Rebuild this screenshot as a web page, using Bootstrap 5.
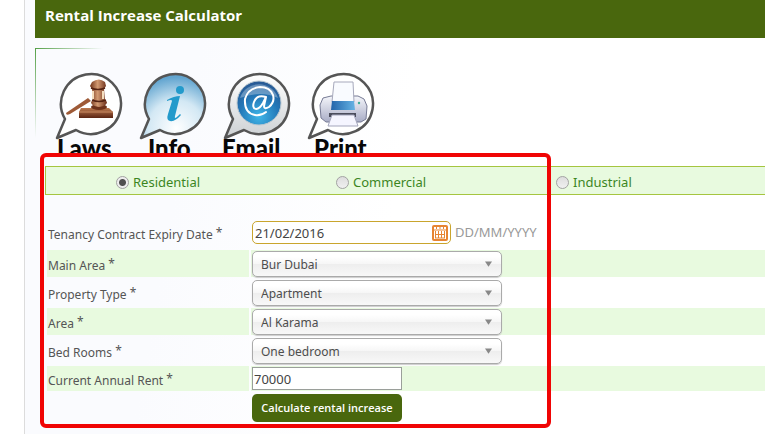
<!DOCTYPE html>
<html lang="en">
<head>
<meta charset="utf-8">
<meta name="viewport" content="width=device-width, initial-scale=1">
<title>Rental Increase Calculator</title>
<link href="https://cdn.jsdelivr.net/npm/bootstrap@5.3.0/dist/css/bootstrap.min.css" rel="stylesheet">
<style>
body{font-family:"Noto Sans","Liberation Sans",sans-serif;font-size:12px;line-height:18px;color:#555;background:#fff;overflow-x:hidden}
.page{margin-left:24px;border-left:1px solid #dcdcdc;padding-left:10px;min-height:100vh;background:linear-gradient(100deg,#fafbfe 0,#fafbfe 180px,#fff 400px)}
.title-bar{background:#49670d;color:#fff;height:38px;padding:6px 10px;margin:0;font-size:15px;line-height:18px;font-weight:700;font-family:"Open Sans","Noto Sans",sans-serif}
.panel{margin-top:10px;padding:0 0 0 10px;background:linear-gradient(90deg,#55a048,transparent 68px) 0 0/100% 1px no-repeat,linear-gradient(#55a048,transparent 90px) 0 0/1px 100% no-repeat}
.tools{padding:24px 0 0 4px;height:110px}
.tools a{display:block;height:92px}
.tools svg{display:block}
.tools text{fill:#080808}
.tool-name{font-family:Lato,sans-serif;font-size:24px;font-weight:900}
.form-zone{padding-top:8px}
.callout-frame{position:absolute;z-index:3;left:-5px;top:-5px;width:511px;bottom:-6px;border:4px solid #f00404;border-radius:6px;pointer-events:none}
.kind-bar{background:#e8fadf;border:1px solid #a5c540;border-right:0;height:29px;padding-left:70px;font-size:13px;color:#3c861f}
.kind-bar label{width:220px;flex:none;gap:4px;padding-top:2px}
.kind-bar input{appearance:none;width:13px;height:13px;margin:1px 0 0;border:1px solid #a2a2a2;border-radius:50%;background:linear-gradient(#ddd,#f0f0f0)}
.kind-bar input:checked{background:radial-gradient(circle,#505050 0 3px,#eee 4px)}
.lines{padding-left:2px}
.line{height:27px;margin-bottom:2px;gap:2px}
.line>label{width:202px;flex:none;padding:7px 1px 0}
.line>label span{position:relative;top:-2px}
.line>.field{padding-left:1px;padding-top:1px}
.line.tint>*{background:#e8fadf}
.line.date{height:31px;margin-top:22px;margin-bottom:2px}
.line.date>label{padding-top:9px}
.line.date>.field{padding-top:4px}
.line.rent{height:25px;margin-bottom:3px}
.line.rent>label{padding-top:6px}
.date-box{width:199px;height:23px;border:1px solid #c9a52d;border-radius:5px;background:#fff;padding:0 2px}
.date-box input{border:0;background:none;outline:0;flex:1;min-width:0;padding:0;height:21px;color:#444;font-size:13px}
.date-box button{border:0;background:none;padding:0;line-height:0}
.hint{color:#999;margin-left:4px;font-size:13px;line-height:22px}
.pick{width:250px;height:26px;line-height:18px;padding:3px 24px 1px 8px;font-size:12px;color:#4d4d4d;border:1px solid #aaa;border-radius:5px;box-shadow:0 1px 1px #ccc;background:url("data:image/svg+xml,%3Csvg xmlns='http://www.w3.org/2000/svg' viewBox='0 0 8 6'%3E%3Cpath d='M0 0h8L4 6z' fill='%23888'/%3E%3C/svg%3E") right 9px top 9px/7px 6px no-repeat,linear-gradient(#fff 0 20%,#f6f6f6 50%,#eee 52%,#f8f8f8)}
.rent-box{width:150px;height:23px;border:1px solid #9a9f9a;border-radius:0;background:#fff;padding:0 1px;color:#444;font-size:13px}
.calc{width:150px;height:28px;margin-left:205px;padding:0;border:0;border-radius:5px;background:#49670d;color:#fff;font-size:11px;font-weight:600;line-height:18px;font-family:"Open Sans","Noto Sans",sans-serif}
.calc:hover{background:#3c550a;color:#fff}
</style>
<script src="https://cdn.jsdelivr.net/npm/bootstrap@5.3.0/dist/js/bootstrap.bundle.min.js"></script>
</head>
<body>
<svg width="0" height="0" class="position-absolute" aria-hidden="true">
  <defs>
    <linearGradient id="wood" x2="0" y2="1"><stop stop-color="#bd7a50"/><stop offset="1" stop-color="#5a2413"/></linearGradient>
    <linearGradient id="head"><stop stop-color="#6f3117"/><stop offset=".45" stop-color="#d39a72"/><stop offset="1" stop-color="#672a16"/></linearGradient>
    <radialGradient id="sky" cx=".55" cy=".85" r=".8"><stop stop-color="#fff"/><stop offset=".55" stop-color="#d3e8f4"/><stop offset="1" stop-color="#62a5d0"/></radialGradient>
    <radialGradient id="orb" cx=".5" cy=".8" r=".75"><stop stop-color="#3fb6e8"/><stop offset=".6" stop-color="#2377b7"/><stop offset="1" stop-color="#285b96"/></radialGradient>
    <linearGradient id="rim" x2="0" y2="1"><stop stop-color="#fff"/><stop offset="1" stop-color="#ccd0d3"/></linearGradient>
    <linearGradient id="shell" x2="0" y2="1"><stop stop-color="#f5f6fb"/><stop offset="1" stop-color="#a9adc6"/></linearGradient>
    <linearGradient id="tray" x2="1"><stop stop-color="#2364aa"/><stop offset="1" stop-color="#66b3e4"/></linearGradient>
    <path id="bubble" d="M16 47A30 30 0 1 1 27 58L8 66Z"/>
  </defs>
</svg>
<main class="page">
  <h1 class="title-bar">Rental Increase Calculator</h1>
  <section class="panel">
    <nav class="tools d-flex" aria-label="Tools">
      <a href="#laws"><svg width="84" height="92" viewBox="0 0 84 92">
        <use href="#bubble" fill="#fff" stroke="#555" stroke-width="2.5" stroke-linejoin="round"/>
        <path d="M30 40l2-4h28l4 4v6H30z" fill="url(#wood)"/><path d="M30 40h34" stroke="#c98a63"/>
        <ellipse cx="50" cy="35" rx="8" ry="3" fill="#6d311a"/>
        <path d="M17 41L39 26l3 3L21 42q-4 2-4-1z" fill="#9e5a37"/>
        <path d="M43 10q7-5 13 0l1 4-2 3 1 11 2 2q0 4-8 5-8-1-8-5l2-2-1-11-2-3z" fill="url(#head)"/>
        <path d="M42 16q7 3 14 0M43 28q7 3 14 0" stroke="#552313" stroke-width="1.5" fill="none"/>
        <path d="M44 19v8M54 19v8" stroke="#f4ddbd" stroke-width="2"/>
        <text class="tool-name" x="8" y="85">Laws</text></svg></a>
      <a href="#info"><svg width="84" height="92" viewBox="0 0 84 92">
        <use href="#bubble" fill="url(#sky)" stroke="#555" stroke-width="2.5" stroke-linejoin="round"/>
        <circle cx="47" cy="18" r="4" fill="#239acb"/>
        <path d="M34 28q7-4 13-4l-5 20q-1 4 3 0l2-2 1 1q-6 7-11 6-4-1-2-7l4-13q0-2-5 0z" fill="#239acb"/>
        <text class="tool-name" x="15" y="85">Info</text></svg></a>
      <a href="#email"><svg width="84" height="92" viewBox="0 0 84 92">
        <use href="#bubble" fill="url(#rim)" stroke="#555" stroke-width="2.5" stroke-linejoin="round"/>
        <circle cx="42" cy="31" r="22" fill="url(#orb)" stroke="#bbc8d0"/>
        <path d="M23 26a20 20 0 0 1 38 0q-17-8-38 0z" fill="#fff" opacity=".3"/>
        <g fill="none" stroke="#fff" stroke-width="2" stroke-linecap="round"><path d="M49 25q-9-3-12 5c-3 8 4 10 9 1l3-6-2 9q0 4 5 1 6-5 4-12-3-8-13-8-12 1-15 12-1 14 10 16 6 1 11-3"/></g>
        <text class="tool-name" x="5" y="85">Email</text></svg></a>
      <a href="#print"><svg width="84" height="92" viewBox="0 0 84 92">
        <use href="#bubble" fill="#fff" stroke="#555" stroke-width="2.5" stroke-linejoin="round"/>
        <path d="M22 26l8-2h27l6 3 3 7-1 13-5 3H25l-5-4-1-13z" fill="url(#shell)" stroke="#777b95"/>
        <path d="M33 10h19l1 20H31z" fill="#f9fbff" stroke="#a7a9bc"/>
        <path d="M31 29h22l1 9H30z" fill="url(#tray)"/>
        <path d="M28 41h27v4H28z" fill="#4b4d5c"/><path d="M31 43h22l4 11H27z" fill="#f5f5ff" stroke="#a3a5bb"/>
        <circle cx="58" cy="31" r="1.2" fill="#3dae96"/>
        <text class="tool-name" x="13" y="85">Print</text></svg></a>
    </nav>
    <form class="form-zone position-relative" onsubmit="return false">
      <div class="callout-frame"></div>
      <div class="kind-bar d-flex align-items-center" role="radiogroup" aria-label="Property use">
        <label class="d-flex align-items-center"><input type="radio" name="kind" checked>Residential</label>
        <label class="d-flex align-items-center"><input type="radio" name="kind">Commercial</label>
        <label class="d-flex align-items-center"><input type="radio" name="kind">Industrial</label>
      </div>
      <div class="lines">
        <div class="line date d-flex"><label for="expiry">Tenancy Contract Expiry Date <span>*</span></label>
          <div class="field d-flex flex-fill"><div class="date-box d-flex align-items-center"><input id="expiry" type="text" value="21/02/2016"><button type="button" aria-label="Open calendar"><svg width="16" height="17" viewBox="0 0 16 17"><rect y="1" width="16" height="16" rx="2" fill="#e78532"/><path d="M2 3h12v12H2z" fill="#fff"/><path d="M2 6h12M3 10.500h10M3 14h10M3.500 7v7M6.500 7v7M9.500 7v7M12.500 7v7M4.500 2v3M8 2v3M11.500 2v3" stroke="#e78532"/></svg></button></div><span class="hint">DD/MM/YYYY</span></div></div>
        <div class="line tint d-flex"><label for="main">Main Area <span>*</span></label><div class="field flex-fill"><select id="main" class="form-select pick"><option>Bur Dubai</option></select></div></div>
        <div class="line d-flex"><label for="type">Property Type <span>*</span></label><div class="field flex-fill"><select id="type" class="form-select pick"><option>Apartment</option></select></div></div>
        <div class="line tint d-flex"><label for="area">Area <span>*</span></label><div class="field flex-fill"><select id="area" class="form-select pick"><option>Al Karama</option></select></div></div>
        <div class="line d-flex"><label for="beds">Bed Rooms <span>*</span></label><div class="field flex-fill"><select id="beds" class="form-select pick"><option>One bedroom</option></select></div></div>
        <div class="line tint rent d-flex"><label for="rent">Current Annual Rent <span>*</span></label><div class="field flex-fill"><input id="rent" class="rent-box d-block" type="text" value="70000"></div></div>
        <button class="btn calc d-block" type="submit">Calculate rental increase</button>
      </div>
    </form>
  </section>
</main>
</body>
</html>
